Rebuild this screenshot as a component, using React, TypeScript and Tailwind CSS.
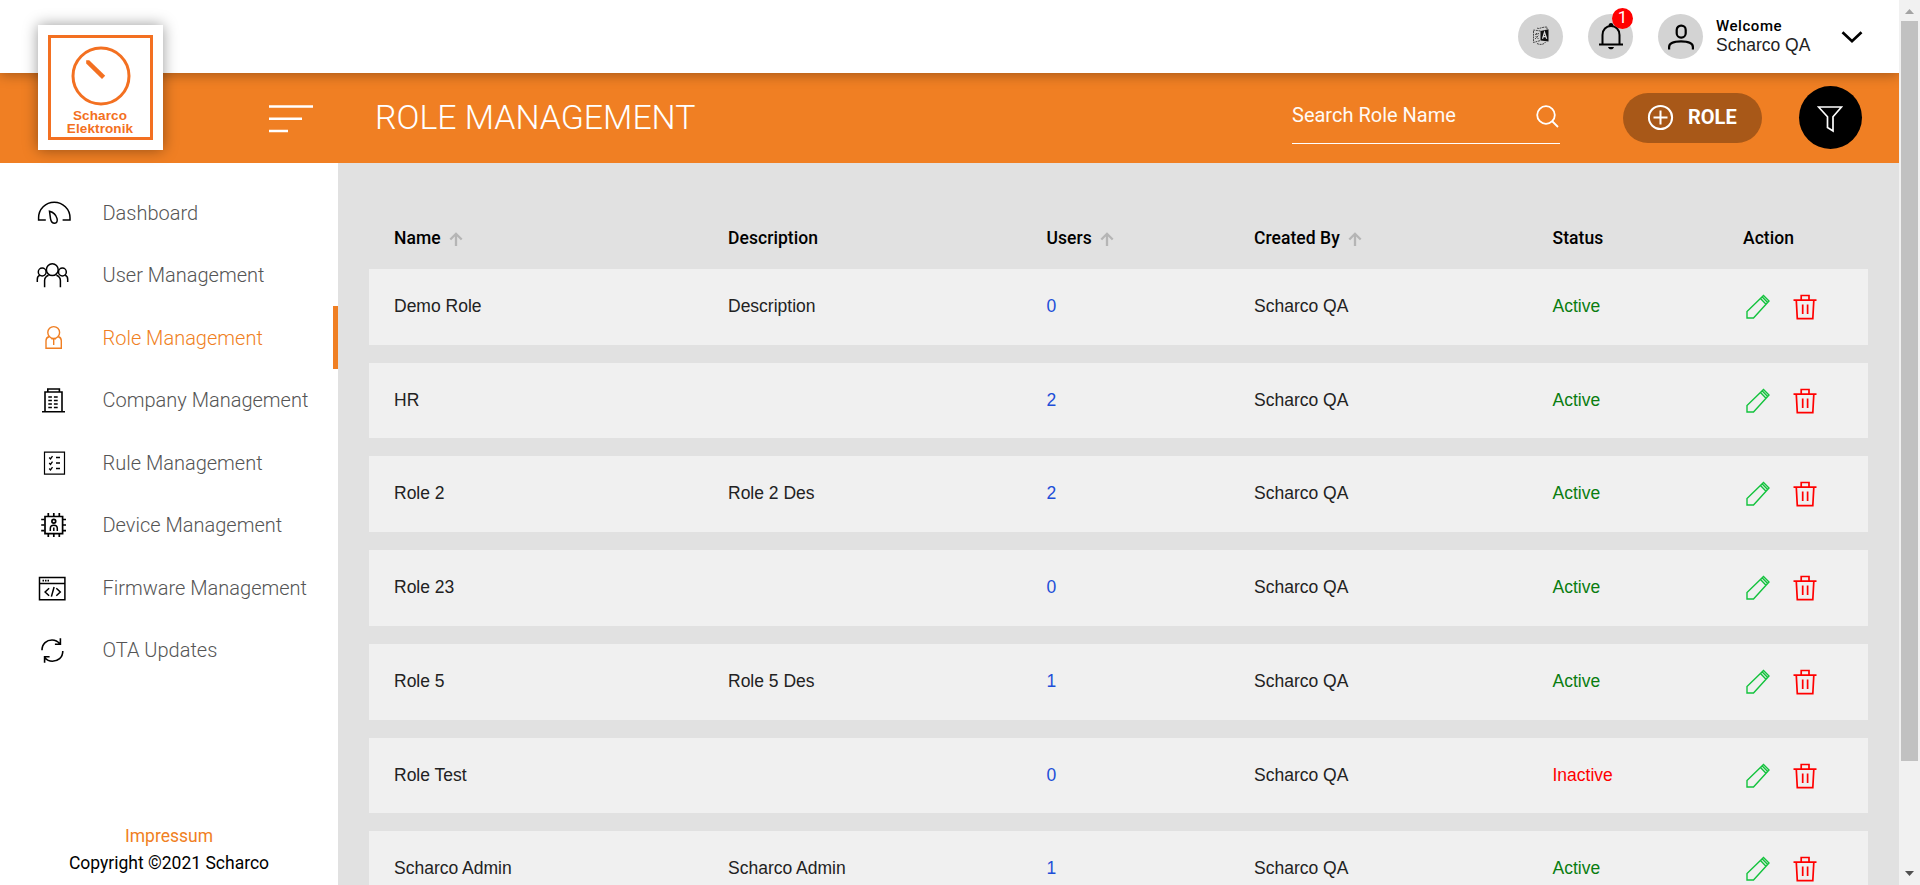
import React from "react";

const NAV = [
  "Dashboard",
  "User Management",
  "Role Management",
  "Company Management",
  "Rule Management",
  "Device Management",
  "Firmware Management",
  "OTA Updates",
];

const NAV_ICONS: React.ReactNode[] = [
  <g key="0" strokeWidth="1.5">
    <path d="M13.800 31H6.600v-2.200C6.600 20 13.600 13.200 22.200 13.200S38 20 38 28.800V31h-7.400" />
    <path d="M17.500 22.200c3 .8 6.500 3.600 7.500 7.200.9 3-.4 4.800-2.300 4.800-2.500 0-3.800-2-4.200-4.600z" />
  </g>,
  <g key="1" strokeWidth="1.5">
    <circle cx="20.300" cy="18.700" r="5.900" />
    <circle cx="10.200" cy="21" r="3.900" />
    <circle cx="30.400" cy="21" r="3.900" />
    <path d="M5.300 31v-2.800c0-2 1-3.400 2.600-3.900M35.700 31v-2.800c0-2-1-3.400-2.600-3.900M12.600 36.300V29.500c0-2.400 1.500-4.300 4-5.300M28.400 36.300V29.500c0-2.400-1.500-4.300-4-5.300" />
  </g>,
  <g key="2" strokeWidth="1.400">
    <circle cx="21.700" cy="18.500" r="5.900" />
    <path d="M17 22.800c-2 .5-3 2-3 4v7.500h15.300v-7.500c0-2-1-3.500-3-4M19.300 24.800h4.700M21.700 25v6" />
  </g>,
  <g key="3" strokeWidth="1.600">
    <path d="M13 35.500V16h17v19.500M10 35.800h23M15.800 16v-3h11.600v3" />
    <path d="M16.300 21h3.600m2 0h3.800M16.300 24.400h3.600m2 0h3.800M16.300 27.900h3.600m2 0h3.800M16.300 31.400h3.600m2 0h3.800" strokeWidth="1.500" />
  </g>,
  <g key="4" strokeWidth="1.200">
    <path d="M12.500 13.200h20v22h-20z" />
    <path d="M17.200 18.500l1.300 1.400 2-2.700M24 18.500h4M17.200 24l1.300 1.400 2-2.700M24 24h4M17.200 29.500l1.300 1.400 2-2.700M24 29.500h4" strokeWidth="1.300" />
  </g>,
  <g key="5" strokeWidth="1.700">
    <path d="M13 15.500h17.600v17.200H13z" />
    <path d="M16.300 15v-3M21.800 15v-3M27.300 15v-3M16.300 36v-3M21.800 36v-3M27.300 36v-3M12.500 18.500H9.200M12.500 24H9.200M12.500 29.700H9.200M34 18.500h-3.300M34 24h-3.300M34 29.700h-3.300" />
    <circle cx="21.800" cy="20.300" r="1.900" />
    <path d="M18.300 30v-2.500c0-2 1.300-3.200 3.500-3.200s3.500 1.200 3.500 3.200V30M21.800 26.500V30" strokeWidth="1.500" />
  </g>,
  <g key="6" strokeWidth="1.500">
    <path d="M7.500 13.500h25.400v22.300H7.500zM7.500 19.500h25.400" />
    <path d="M10.500 16.600h1.500m1 0h1.500m1 0H17" strokeWidth="1.700" />
    <path d="M17.100 24.200l-4 3.800 4 3.800M24.300 24.200l4 3.800-4 3.800M22.100 23l-2.700 9.600" />
  </g>,
  <g key="7" strokeWidth="1.600">
    <path d="M10 24.300C10 17.500 14.800 14 20 14c3.400 0 6 1.500 8 4M28.400 12.200v6h-5.500M30.800 25c0 6.800-5 10.200-10.400 10.200-3.300 0-5.800-1.400-7.800-3.800M12.600 36.800v-6h5" />
  </g>,
];

const ROWS = [
  ["Demo Role", "Description", "0", "Active"],
  ["HR", "", "2", "Active"],
  ["Role 2", "Role 2 Des", "2", "Active"],
  ["Role 23", "", "0", "Active"],
  ["Role 5", "Role 5 Des", "1", "Active"],
  ["Role Test", "", "0", "Inactive"],
  ["Scharco Admin", "Scharco Admin", "1", "Active"],
];

const GRID =
  "grid grid-cols-[334px_318.500px_207.500px_298.500px_190.500px_1fr] pl-[25px]";

function SortArrow() {
  return (
    <svg width="14" height="15" viewBox="0 0 14 15" fill="none" stroke="#b5b5b5" strokeWidth="2.300" className="mt-[6px]">
      <path d="M7 14V2M1.300 7.500L7 1.800 12.700 7.500" />
    </svg>
  );
}

function Header() {
  return (
    <header className="relative z-10 flex h-[73px] items-center justify-end bg-white pr-[36px] shadow-[0_2px_12px_rgba(0,0,0,0.3)]">
      <div className="absolute left-[38px] top-[25px] flex h-[125px] w-[125px] items-center justify-center bg-white shadow-[0_0_14px_rgba(0,0,0,0.4)]">
        <div className="flex h-[105px] w-[105px] flex-col items-center border-[3px] border-[#f37021]">
          <svg width="60" height="60" viewBox="0 0 60 60" fill="none" stroke="#f37021" className="mt-[8px] shrink-0">
            <circle cx="30" cy="30" r="28" strokeWidth="3" />
            <path d="M15.200 14.200h3L34.200 29.800l-3.200 3.200L15.200 17.500z" fill="#f37021" stroke="none" />
          </svg>
          <div className="mt-[3px] pr-[1px] text-center font-['Liberation_Sans',sans-serif] text-[13.500px] font-bold leading-[13px] tracking-[0.100px] text-[#f37021]">
            Scharco
            <br />
            Elektronik
          </div>
        </div>
      </div>
      <div className="flex size-[45px] items-center justify-center rounded-full bg-[#d3d3d3]">
        <svg width="18" height="20" viewBox="0 0 18 20" fill="none" stroke="#222" strokeWidth="0.8" className="-mt-[1px] ml-[1px]">
          <path d="M8.500 5l8-1.800v12.300L8.500 14.500z" fill="#111" stroke="none" />
          <path d="M10.500 12.700l2-6.500 2.200 6.500M11.200 10.600h2.800" stroke="#ddd" strokeWidth="1.200" />
          <path d="M8.500 5L1.500 4v12.500l7-2M3 8.500l4-1M4.500 7l.5 1.500M3 13l3.500-3.500M3.500 10l3 3M5 2C7 3.500 9 1 15 1v2M5 17.500c3 1.600 7 1.200 8.500-1.500" strokeDasharray="2 0.700" />
        </svg>
      </div>
      <div className="relative ml-[25px] flex size-[45px] items-center justify-center rounded-full bg-[#d3d3d3]">
        <svg width="26" height="30" viewBox="0 0 26 30" fill="none" stroke="#000" strokeWidth="2" className="mt-[1px]">
          <path d="M1 22.500h24M4.500 22V13c0-5.500 3.600-9 8.500-9s8.500 3.500 8.500 9v9" />
          <path d="M10.500 4c0-2 1-3 2.500-3s2.500 1 2.500 3zM10 25h6c-.5 1.600-1.500 2.300-3 2.300S10.500 26.600 10 25z" fill="#000" stroke="none" />
        </svg>
        <span className="absolute -top-[6px] left-[24px] flex size-[21px] items-center justify-center rounded-full bg-[#ff0000] pb-[2px] text-[17px] leading-none text-white">
          1
        </span>
      </div>
      <div className="ml-[25px] flex size-[45px] items-center justify-center rounded-full bg-[#d3d3d3]">
        <svg width="28" height="28" viewBox="0 0 28 28" fill="none" stroke="#000" strokeWidth="2.200">
          <rect x="9.700" y="2.600" width="9" height="12" rx="4.300" />
          <path d="M2.100 26.500v-2.500c0-4 5.500-5.700 11.900-5.700s11.900 1.700 11.900 5.700v2.500" />
        </svg>
      </div>
      <div className="-mt-[2px] ml-[13px] w-[96px] whitespace-nowrap">
        <div className="text-[15px] font-medium leading-[18px] tracking-[0.550px] text-black">Welcome</div>
        <div className="font-['Liberation_Sans',sans-serif] text-[17.500px] leading-[20px] text-[#222]">Scharco QA</div>
      </div>
      <svg width="22" height="14" viewBox="0 0 22 14" fill="none" stroke="#000" strokeWidth="2.700" className="ml-[29px]">
        <path d="M1.500 2.200L11 11.200l9.500-9" />
      </svg>
    </header>
  );
}

function TitleBar() {
  return (
    <div className="flex h-[90px] items-center bg-[#f07f23] pr-[37px]">
      <svg width="44" height="28" viewBox="0 0 44 28" stroke="#fff" strokeWidth="2.500" className="ml-[269px] mt-[1px]">
        <path d="M0 1.500h44M0 13.700h33M0 25.900h19" />
      </svg>
      <h1 className="-mt-[1px] ml-[62px] text-[33.850px] font-light leading-none text-white">ROLE MANAGEMENT</h1>
      <div className="ml-auto -mt-[3px] flex h-[55px] w-[268px] justify-between border-b border-white">
        <span className="mt-[14px] text-[20px] leading-[24px] text-[#fffaf5]">Search Role Name</span>
        <svg width="23" height="23" viewBox="0 0 23 23" fill="none" stroke="#fff" strokeWidth="1.800" className="mt-[16px] mr-[1px]">
          <circle cx="10" cy="10" r="8.800" />
          <path d="M16 16l6 6" />
        </svg>
      </div>
      <button className="ml-[63px] flex h-[50px] w-[139px] items-center rounded-full bg-[#a85818] pl-[24px] text-white">
        <svg width="27" height="27" viewBox="0 0 27 27" fill="none" stroke="#fff" strokeWidth="2" className="-mt-[1px]">
          <circle cx="13.500" cy="13.500" r="11.600" />
          <path d="M13.500 6.500v14M6.500 13.500h14" />
        </svg>
        <span className="-mt-[2px] ml-[14px] text-[20px] font-bold">ROLE</span>
      </button>
      <button className="-mt-[1px] ml-[37px] flex size-[63px] items-center justify-center rounded-full bg-black">
        <svg width="26" height="28" viewBox="0 0 26 28" fill="none" stroke="#fff" strokeWidth="1.700" className="mr-[1px] mt-[3px]">
          <path d="M1.500 2h23l-8.500 9.800V26l-5.500-3.500V11.800z" />
        </svg>
      </button>
    </div>
  );
}

function Sidebar() {
  return (
    <aside className="flex w-[338px] shrink-0 flex-col bg-white pt-[18px]">
      {NAV.map((label, i) => (
        <div
          key={label}
          className={
            "flex h-[62.500px] shrink-0 items-center pl-[32px] pt-[1px] text-[20px] font-light " +
            (i === 2 ? "border-r-[5px] border-[#f07f23] text-[#f07f23]" : "text-[#555]")
          }
        >
          <svg width="44" height="48" viewBox="0 0 44 48" fill="none" stroke={i === 2 ? "#f07f23" : "#000"}>
            {NAV_ICONS[i]}
          </svg>
          <span className="ml-[26.500px] whitespace-nowrap">{label}</span>
        </div>
      ))}
      <div className="mt-auto pb-[8px] text-center text-[17.500px] leading-[27px]">
        <div className="text-[#f07f23]">Impressum</div>
        <div className="text-black">Copyright ©2021 Scharco</div>
      </div>
    </aside>
  );
}

function RoleTable() {
  return (
    <main className="min-w-0 flex-1 overflow-hidden bg-[#e1e1e1] pl-[31px] pr-[31px] pt-[60px]">
      <div className={GRID + " h-[45.800px] text-[17.500px] font-medium leading-[31px] tracking-[0.050px] text-black"}>
        <div className="flex gap-[8px]">Name <span className="pt-[3px]"><SortArrow /></span></div>
        <div>Description</div>
        <div className="flex gap-[8px]">Users <span className="pt-[3px]"><SortArrow /></span></div>
        <div className="flex gap-[8px]">Created By <span className="pt-[3px]"><SortArrow /></span></div>
        <div>Status</div>
        <div>Action</div>
      </div>
      <div className="flex flex-col gap-[18px] font-['Liberation_Sans',sans-serif]">
        {ROWS.map(([name, desc, users, status]) => (
          <div key={name} className={GRID + " h-[75.750px] items-center bg-[#f0f0f0] pb-[1.600px] text-[17.500px] text-[#222]"}>
            <div>{name}</div>
            <div>{desc}</div>
            <div className="text-[#1d4ed8]">{users}</div>
            <div>Scharco QA</div>
            <div className={status === "Active" ? "text-[#0a7d10]" : "text-[#ff0000]"}>{status}</div>
            <div className="flex items-center pt-[2px]">
              <svg width="26" height="26" viewBox="0 0 26 26" fill="none" stroke="#12c23c" strokeWidth="1.400" className="ml-[2px]">
                <path d="M2 24v-6.500L18.500 1.500l5.500 5.500L8.500 24zM15.500 4.500l5.500 5.700M17.300 3l5.400 5.600" />
              </svg>
              <svg width="24" height="26" viewBox="0 0 24 26" fill="none" stroke="#f00" strokeWidth="1.700" className="ml-[22px]">
                <path d="M0.500 6.200h23M8.200 6V1.500h7.800V6M3.300 6.500l1 18.200h15.500l1-18.200M9.700 10.500v9.500M14.600 10.500v9.500" />
              </svg>
            </div>
          </div>
        ))}
      </div>
    </main>
  );
}

export default function App() {
  return (
    <div className="flex h-[885px] w-[1920px] overflow-hidden bg-white font-['Roboto',sans-serif]">
      <div className="relative z-0 flex w-[1899px] shrink-0 flex-col overflow-hidden">
        <Header />
        <TitleBar />
        <div className="flex min-h-0 flex-1">
          <Sidebar />
          <RoleTable />
        </div>
      </div>
      <div className="flex w-[21px] flex-col items-center bg-[#f1f1f1]">
        <svg width="17" height="21" viewBox="0 0 17 21" className="shrink-0">
          <path d="M4 14h9L8.500 9z" fill="#a3a3a3" />
        </svg>
        <div className="h-[740px] w-[17px] shrink-0 bg-[#c1c1c1]" />
        <svg width="17" height="21" viewBox="0 0 17 21" className="mt-auto shrink-0">
          <path d="M4 7h9l-4.500 5z" fill="#505050" />
        </svg>
      </div>
    </div>
  );
}
